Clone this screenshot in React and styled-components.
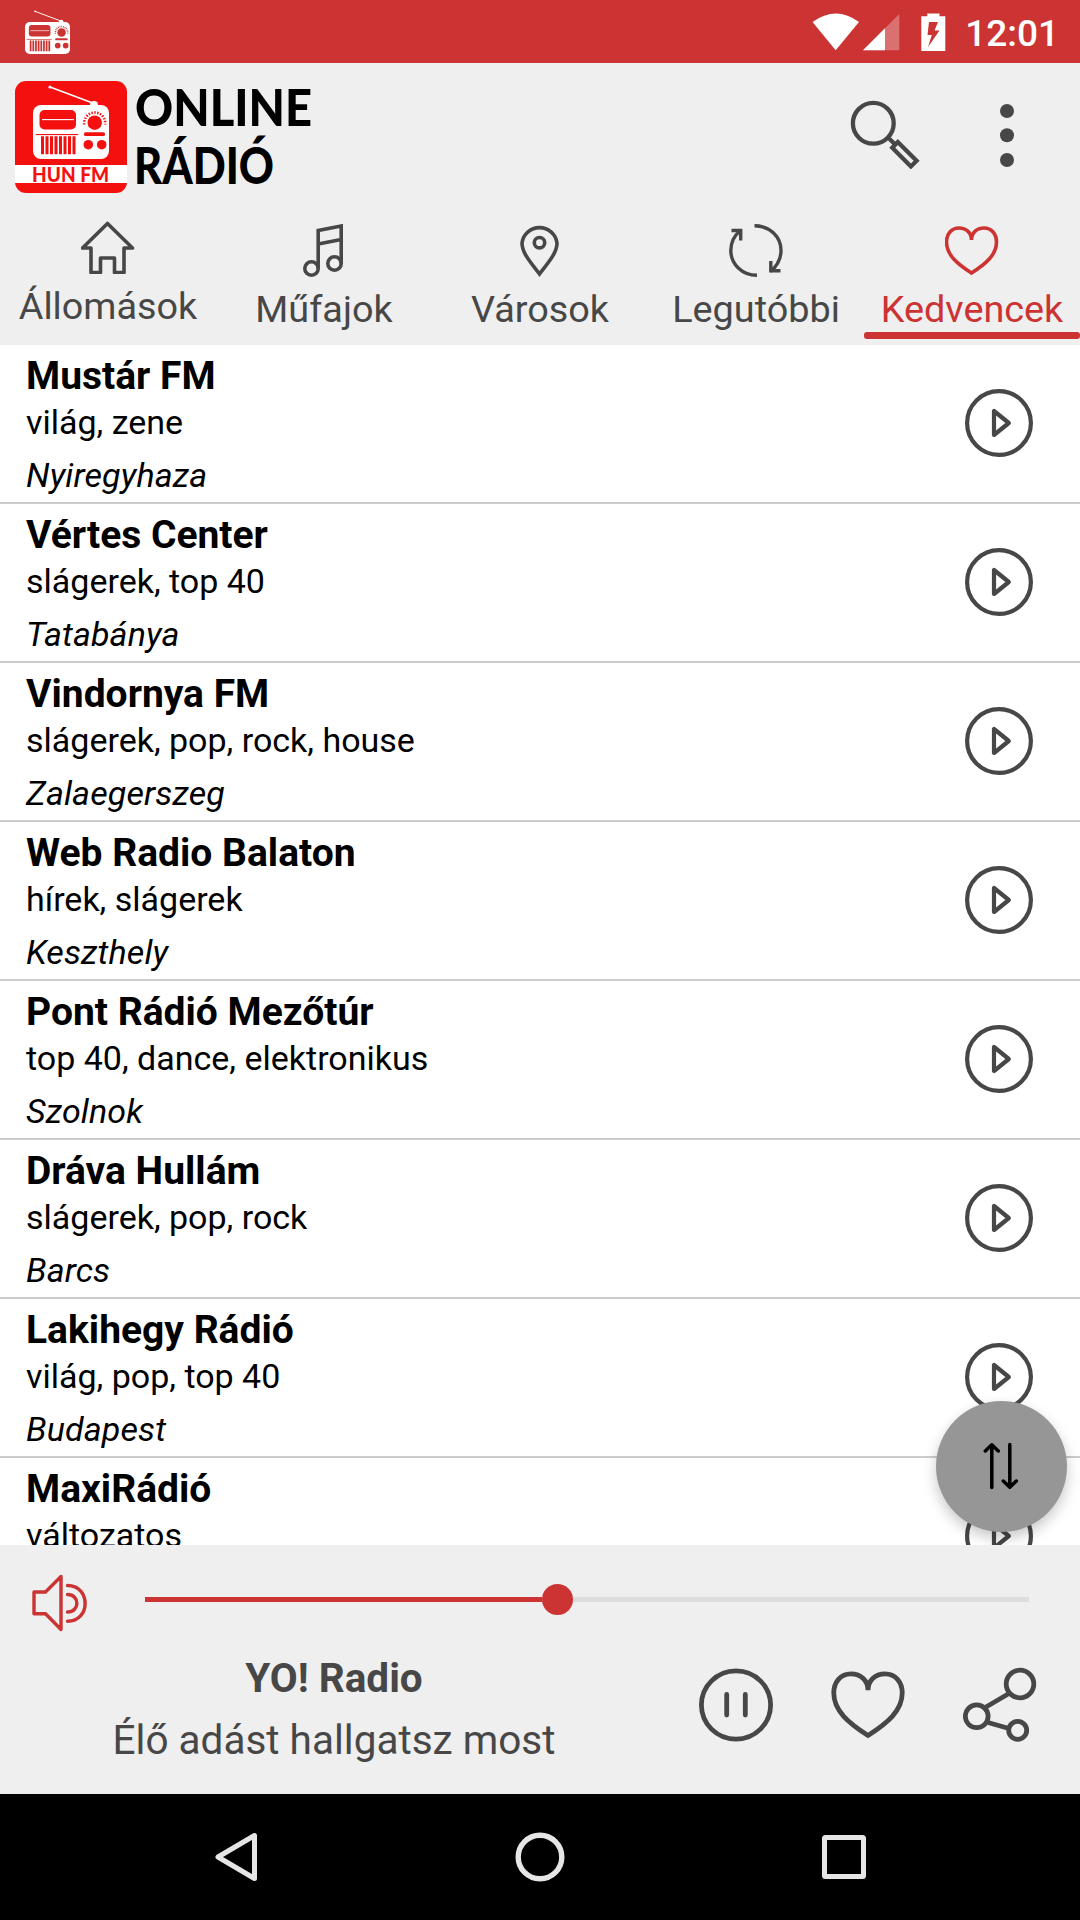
import { useState } from "react";
import styled, { createGlobalStyle } from "styled-components";

const GlobalStyle = createGlobalStyle`
  body {
    margin: 0;
    background: #fff;
    font-family: Roboto, "Noto Sans", sans-serif;
  }
  svg {
    display: block;
  }
`;

const Screen = styled.div`
  display: flex;
  flex-direction: column;
  width: 1080px;
  height: 1920px;
  overflow: hidden;
  background: #fff;
  color: #474747;
`;

const StatusBar = styled.div`
  display: flex;
  align-items: center;
  justify-content: space-between;
  box-sizing: border-box;
  flex: none;
  height: 63px;
  padding: 0 21px 0 25px;
  background: #cc3333;
  color: #fff;
`;

const StatusIcons = styled.div`
  display: flex;
  align-items: center;
`;

const Clock = styled.span`
  margin: 4px 0 0 17px;
  font-size: 37px;
  font-weight: 500;
  line-height: 44px;
`;

const Header = styled.header`
  display: flex;
  align-items: flex-start;
  justify-content: space-between;
  box-sizing: border-box;
  flex: none;
  height: 153px;
  padding: 18px 66px 0 15px;
  background: #efefef;
`;

const Brand = styled.div`
  display: flex;
  gap: 5px;
`;

const LogoType = styled.svg`
  margin-top: -16px;
  font-family: Lato, sans-serif;
  font-size: 51px;
  font-weight: 900;
`;

const HeaderActions = styled.div`
  display: flex;
  gap: 80px;
  padding-top: 18px;
`;

const Tabs = styled.nav`
  display: grid;
  grid-template-columns: repeat(5, 1fr);
  flex: none;
  height: 129px;
  background: #efefef;
`;

const Tab = styled.button`
  display: flex;
  flex-direction: column;
  align-items: center;
  box-sizing: border-box;
  height: 129px;
  padding: ${(props) => (props.$raised ? "5px" : "8px")} 0 6px;
  border: none;
  background: none;
  color: ${(props) => (props.$active ? "#cc3333" : "#474747")};
  font-family: inherit;
`;

const TabLabel = styled.span`
  margin-top: 9px;
  font-size: 37.8px;
  line-height: 46px;
  white-space: nowrap;
`;

const TabMarker = styled.div`
  width: 216px;
  height: 7px;
  margin-top: auto;
  border-radius: 3px;
  background: ${(props) => (props.$active ? "#cc3333" : "transparent")};
`;

const ListArea = styled.main`
  position: relative;
  flex: none;
  height: 1200px;
  overflow: hidden;
`;

const Row = styled.div`
  display: flex;
  justify-content: space-between;
  box-sizing: border-box;
  height: 159px;
  padding: 8px 47px 0 26px;
  border-bottom: 2px solid #cccccc;
  color: #000;
`;

const Name = styled.div`
  font-size: 39px;
  font-weight: 700;
  line-height: 46px;
`;

const Genres = styled.div`
  margin-top: 3px;
  font-size: 34px;
  line-height: 40px;
`;

const City = styled.div`
  margin-top: 13px;
  font-size: 34px;
  font-style: italic;
  letter-spacing: 0.12px;
  line-height: 40px;
`;

const PlayButton = styled.div`
  padding-top: 36px;
  color: #474747;
`;

const SortButton = styled.button`
  position: absolute;
  right: 13px;
  bottom: 13px;
  display: flex;
  align-items: center;
  justify-content: center;
  width: 131px;
  height: 131px;
  padding: 0 1px 2px 0;
  border: none;
  border-radius: 50%;
  background: #969696;
  color: #000;
  box-shadow: 0 6px 14px rgba(0, 0, 0, 0.22);
`;

const Player = styled.footer`
  flex: none;
  height: 249px;
  background: #efefef;
`;

const VolumeRow = styled.div`
  display: flex;
  align-items: flex-start;
  gap: 58px;
  height: 87px;
  padding: 29px 51px 0 32px;
  box-sizing: border-box;
`;

const Slider = styled.div`
  display: flex;
  align-items: center;
  flex: 1;
  height: 31px;
  margin-top: 10px;
`;

const SliderFill = styled.div`
  height: 5px;
  background: #cc3333;
`;

const SliderThumb = styled.div`
  flex: none;
  width: 31px;
  height: 31px;
  border-radius: 50%;
  background: #cc3333;
`;

const SliderRest = styled.div`
  flex: 1;
  height: 5px;
  background: #dddddd;
`;

const NowPlaying = styled.div`
  display: flex;
  height: 162px;
`;

const NowText = styled.div`
  width: 668px;
  padding-top: 22px;
  text-align: center;
`;

const NowName = styled.div`
  font-size: 40.5px;
  font-weight: 700;
  line-height: 48px;
`;

const NowStatus = styled.div`
  margin-top: 14px;
  font-size: 40.5px;
  line-height: 48px;
`;

const PlayerActions = styled.div`
  display: flex;
  gap: 58px;
  padding: 35px 0 0 31px;
`;

const NavBar = styled.div`
  display: flex;
  align-items: center;
  justify-content: space-between;
  box-sizing: border-box;
  flex: none;
  height: 126px;
  padding: 0 211px;
  background: #000;
  color: #e6e6e6;
`;

const Icon = ({ w, h, sw = 3.2, box, children }) => (
  <svg
    width={w}
    height={h}
    viewBox={box || `0 0 ${w} ${h}`}
    fill="none"
    stroke="currentColor"
    strokeWidth={sw}
  >
    {children}
  </svg>
);

// the portable radio, used in the status bar and in the logo
const RadioShape = ({ back }) => (
  <g stroke="none" fill="#fff">
    <path d="M35 6L79 22.5" stroke="#fff" strokeWidth="1.6" />
    <circle cx="35" cy="6" r="1.6" />
    <circle cx="79" cy="24" r="4" />
    <rect x="18" y="24" width="76" height="54" rx="8" />
    <g fill={back}>
      <rect x="24.5" y="29" width="36.5" height="19.5" rx="5" />
      <circle cx="79.7" cy="41.7" r="7.2" />
      <rect x="69" y="51.3" width="21" height="3.6" rx="1.5" />
      <rect x="20.7" y="53" width="42.5" height="1.1" />
      <circle cx="73.3" cy="63.7" r="4.8" />
      <circle cx="86.7" cy="63.7" r="4.8" />
    </g>
    <path d="M27 38.6H59" stroke="#fff" strokeWidth="1.1" />
    <path d="M26 64.3H61" stroke={back} strokeWidth="18" strokeDasharray="3 1.5" />
    <path
      d="M69.3 43.5A10.5 10.5 0 1 1 90.1 43.5"
      fill="none"
      stroke={back}
      strokeWidth="2.6"
      strokeDasharray="1.4 1.5"
    />
  </g>
);

const LogoBadge = () => (
  <svg width="112" height="112" viewBox="0 0 112 112">
    <rect width="112" height="112" rx="11" fill="#f51010" />
    <RadioShape back="#f51010" />
    <rect y="84" width="112" height="18" fill="#fff" />
    <text
      x="17"
      y="100.5"
      textLength="77"
      lengthAdjust="spacingAndGlyphs"
      fontFamily="Lato, sans-serif"
      fontWeight="900"
      fontSize="20"
      fill="#f51010"
    >
      HUN FM
    </text>
  </svg>
);

const LogoText = () => (
  <LogoType width="200" height="144" viewBox="-4 -16 200 144" fill="#000">
    <text x="-1" y="45" textLength="177" lengthAdjust="spacingAndGlyphs">
      ONLINE
    </text>
    <text x="-2" y="103" textLength="140" lengthAdjust="spacingAndGlyphs">
      RÁDIÓ
    </text>
  </LogoType>
);

const heartPath =
  "M27 14C27 7 22 2 14.5 2C7 2 2 8 2 16C2 29 13 38 27 47C41 38 52 29 52 16C52 8 47 2 39.5 2C32 2 27 7 27 14Z";

const HomeIcon = () => (
  <Icon w={54} h={53} sw={3.6}>
    <path
      d="M26.5 2.5L51.5 27H43V51.5H33.5V37H19.5V51.5H10V27H1.5Z"
      strokeLinejoin="round"
    />
  </Icon>
);

const MusicIcon = () => (
  <Icon w={42} h={53} sw={3.6}>
    <circle cx="8.5" cy="44.5" r="6.7" />
    <circle cx="31.5" cy="39.5" r="6.7" />
    <path d="M15.2 44.5V6.5L38.2 2V39.5M15.2 20L38.2 15.5" />
  </Icon>
);

const PinIcon = () => (
  <Icon w={40} h={53} sw={3.6}>
    <path d="M19.5 50C13 41 2 30 2 19A17.6 17.2 0 0 1 37 19C37 30 26 41 19.5 50Z" />
    <circle cx="19.5" cy="18.7" r="5.2" />
  </Icon>
);

const RefreshIcon = () => (
  <Icon w={54} h={53} sw={3.4}>
    <path d="M25.5 1.8C41 1.8 52 13 52 26.5C52 34 48 42 41.5 47.5" />
    <path d="M28 51.2C13 51.2 1.8 40 1.8 26.5C1.8 18 6 11 11.5 6.5" />
    <path d="M2.5 6.5H11.7V16.5M51.5 46.7H41.8V37" />
  </Icon>
);

const HeartIcon = () => (
  <Icon w={54} h={53} box="0.5 -2 54 53" sw={3.6}>
    <path d={heartPath} />
  </Icon>
);

const tabs = [
  { label: "Állomások", icon: HomeIcon },
  { label: "Műfajok", icon: MusicIcon },
  { label: "Városok", icon: PinIcon },
  { label: "Legutóbbi", icon: RefreshIcon },
  { label: "Kedvencek", icon: HeartIcon },
];

const stations = [
  { name: "Mustár FM", genres: "világ, zene", city: "Nyiregyhaza" },
  { name: "Vértes Center", genres: "slágerek, top 40", city: "Tatabánya" },
  { name: "Vindornya FM", genres: "slágerek, pop, rock, house", city: "Zalaegerszeg" },
  { name: "Web Radio Balaton", genres: "hírek, slágerek", city: "Keszthely" },
  { name: "Pont Rádió Mezőtúr", genres: "top 40, dance, elektronikus", city: "Szolnok" },
  { name: "Dráva Hullám", genres: "slágerek, pop, rock", city: "Barcs" },
  { name: "Lakihegy Rádió", genres: "világ, pop, top 40", city: "Budapest" },
  { name: "MaxiRádió", genres: "változatos", city: "" },
];

export default function App() {
  const [active, setActive] = useState("Kedvencek");
  const [volume] = useState(397);

  return (
    <Screen>
      <GlobalStyle />
      <StatusBar>
        <Icon w={45} h={45} box="18 2 76 76">
          <RadioShape back="#cc3333" />
        </Icon>
        <StatusIcons>
          <svg width="136" height="38" viewBox="0 0 136 38" fill="#fff">
            <path d="M0.5 9Q24 -8 47 9L23.7 37.3Z" />
            <path d="M51 37.3L87.3 1V37.3Z" fillOpacity="0.3" />
            <path d="M51 37.3L73 15.3V37.3Z" />
            <path
              fillRule="evenodd"
              d="M115.3 0.5H127.5V3.3H133.3V38H109.3V3.3H115.3ZM117 9L115.5 22H119.8L116 34L127.5 17.5H122.5L126 9Z"
            />
          </svg>
          <Clock>12:01</Clock>
        </StatusIcons>
      </StatusBar>

      <Header>
        <Brand>
          <LogoBadge />
          <LogoText />
        </Brand>
        <HeaderActions>
          <Icon w={70} h={70} sw={4.3}>
            <circle cx="23.3" cy="24.3" r="20.4" />
            <path d="M38 38.5L44.7 45" />
            <path d="M47.8 43L66.6 61.7L60.9 67.4L42.3 48.7Z" />
          </Icon>
          <svg width="14" height="70" viewBox="0 0 14 70" fill="#474747">
            <circle cx="7" cy="12" r="7" />
            <circle cx="7" cy="36.3" r="7" />
            <circle cx="7" cy="61" r="7" />
          </svg>
        </HeaderActions>
      </Header>

      <Tabs>
        {tabs.map((tab) => {
          const TabIcon = tab.icon;
          return (
            <Tab
              key={tab.label}
              $active={tab.label === active}
              $raised={tab.label === "Állomások"}
              onClick={() => setActive(tab.label)}
            >
              <TabIcon />
              <TabLabel>{tab.label}</TabLabel>
              <TabMarker $active={tab.label === active} />
            </Tab>
          );
        })}
      </Tabs>

      <ListArea>
        {stations.map((station) => (
          <Row key={station.name}>
            <div>
              <Name>{station.name}</Name>
              <Genres>{station.genres}</Genres>
              <City>{station.city}</City>
            </div>
            <PlayButton>
              <Icon w={68} h={68} sw={4.2}>
                <circle cx="34" cy="34" r="31.9" />
                <path d="M29 22V46L43.8 34Z" strokeLinejoin="round" />
              </Icon>
            </PlayButton>
          </Row>
        ))}
        <SortButton>
          <Icon w={36} h={48} sw={3.5}>
            <g strokeLinecap="round" strokeLinejoin="round">
              <path d="M8.8 45.5V3M2.3 9L8.8 2.8L15.3 9" />
              <path d="M26.8 2.5V45M20.3 39L26.8 45.2L33.3 39" />
            </g>
          </Icon>
        </SortButton>
      </ListArea>

      <Player>
        <VolumeRow>
          <svg width="55" height="58" viewBox="0 0 55 58" fill="none" stroke="#cc3333" strokeWidth="3.4">
            <path d="M2 18H13.5L29 2.5V55.5L13.5 39.7H2Z" strokeLinejoin="round" />
            <path d="M35.5 20.5C48 20.5 48 38 35.5 38M35.5 11.5C59 11.5 59 47.3 35.5 47.3" strokeLinecap="round" />
          </svg>
          <Slider>
            <SliderFill style={{ width: volume }} />
            <SliderThumb />
            <SliderRest />
          </Slider>
        </VolumeRow>
        <NowPlaying>
          <NowText>
            <NowName>YO! Radio</NowName>
            <NowStatus>Élő adást hallgatsz most</NowStatus>
          </NowText>
          <PlayerActions>
            <Icon w={74} h={76} sw={4.8}>
              <ellipse cx="37" cy="38" rx="34.6" ry="34.1" />
              <path d="M27.7 27.5V48M46.3 27.5V48" strokeLinecap="round" />
            </Icon>
            <Icon w={74} h={76} box="0 -3 54 55.5" sw={3.5}>
              <path d={heartPath} />
            </Icon>
            <Icon w={74} h={76} sw={4.8}>
              <circle cx="13.7" cy="49.3" r="11.4" />
              <circle cx="57" cy="17" r="13.8" />
              <circle cx="54.7" cy="63.3" r="9" />
              <path d="M23 40L46 26.5M25 55.5L46 61.5" />
            </Icon>
          </PlayerActions>
        </NowPlaying>
      </Player>

      <NavBar>
        <Icon w={50} h={50} sw={5}>
          <path d="M43.5 3.5V46.5L7 25Z" strokeLinejoin="round" />
        </Icon>
        <Icon w={50} h={50} sw={5.4}>
          <circle cx="25" cy="25" r="21.8" />
        </Icon>
        <Icon w={50} h={50} sw={5}>
          <rect x="5.5" y="5.5" width="39" height="39" rx="1" />
        </Icon>
      </NavBar>
    </Screen>
  );
}
